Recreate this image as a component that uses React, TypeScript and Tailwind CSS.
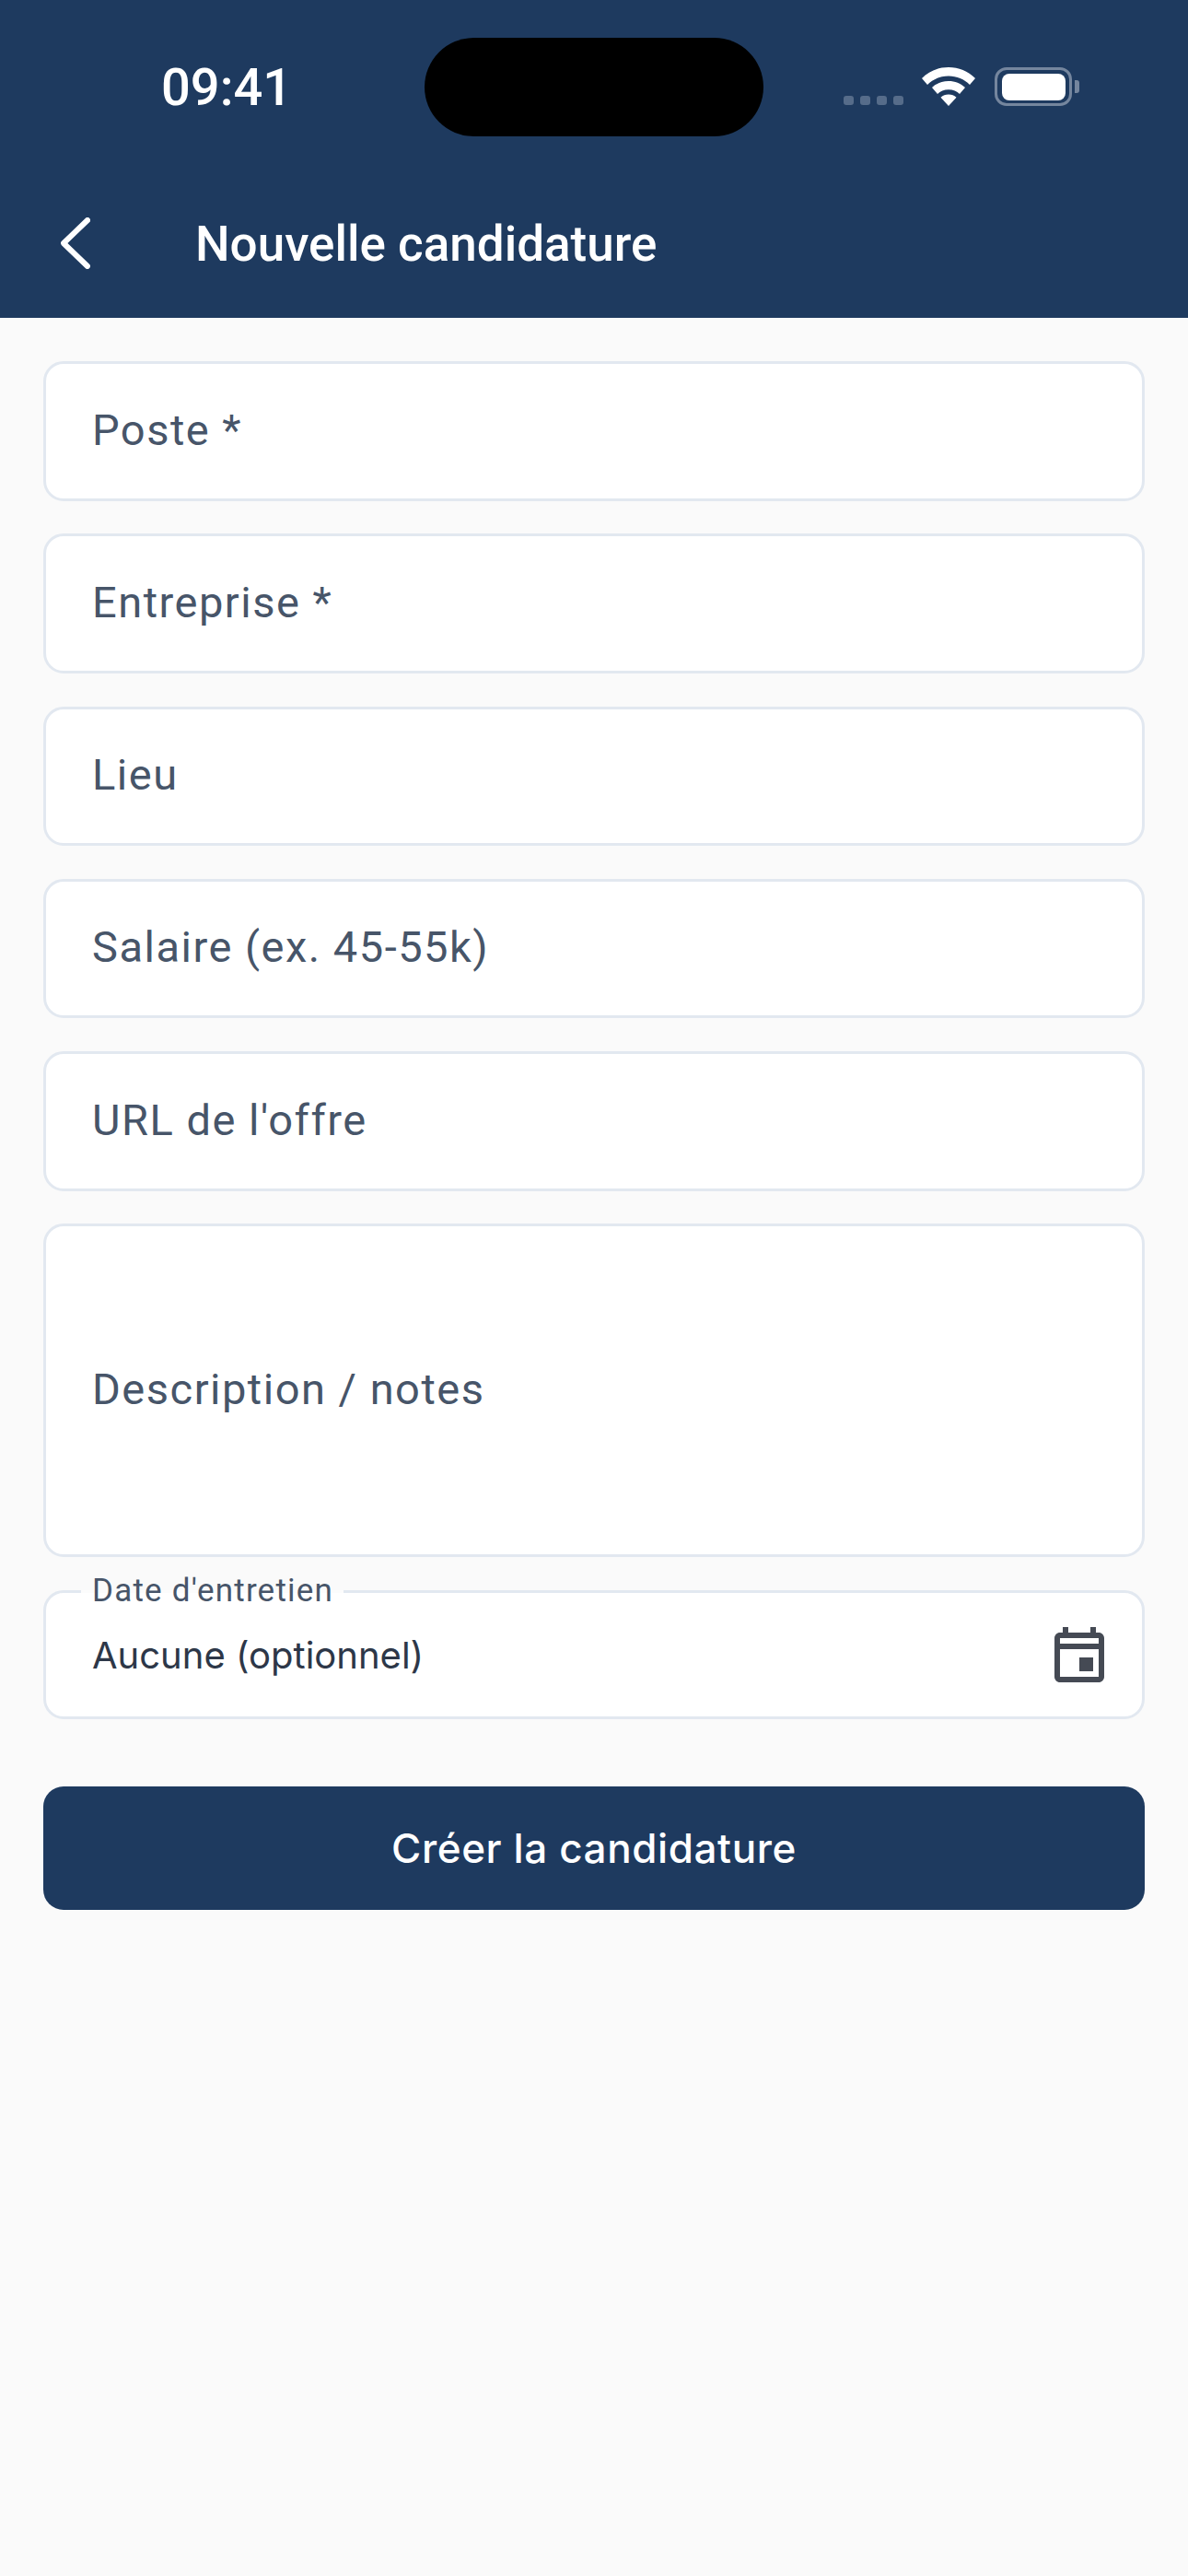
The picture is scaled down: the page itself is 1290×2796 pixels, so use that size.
const roboto = { fontFamily: "Roboto, sans-serif" };

function Field({ label, tall }: { label: string; tall?: boolean }) {
  return (
    <div
      className={`flex items-center rounded-[22px] border-[3px] border-[#e2e8f0] bg-white pb-[2px] pl-[50px] pr-[48px] text-[47px] tracking-[1.5px] text-[#475569] ${tall ? "h-[362px]" : "h-[151.5px]"}`}
    >
      {label}
    </div>
  );
}

function Wifi() {
  return (
    <svg width="58" height="42" viewBox="0 0 58 42" fill="#fff">
      <path d="M29 0C18 0 8 4 0 12l6 7C12 13 20 9.500 29 9.500S46 13 52 19l6-7C50 4 40 0 29 0Z" />
      <path d="M29 15c-7 0-13 2.500-18 7l6 7c3-3 7-4.800 12-4.800S38 26 41 29l6-7c-5-4.500-11-7-18-7Z" />
      <path d="M29 29.500c-3.500 0-6 1-8.500 3.200L29 42l8.500-9.300c-2.500-2.200-5-3.200-8.500-3.200Z" />
    </svg>
  );
}

export default function App() {
  return (
    <div className="flex h-[2796px] w-[1290px] flex-col bg-[#fafafa]" style={roboto}>
      <header className="h-[345px] bg-[#1e3a5f] text-white">
        <div className="relative flex h-[190px] items-start">
          <span className="ml-[175px] mt-[61px] w-[141px] text-[56px] font-medium leading-[68px]">09:41</span>
          <div className="ml-[145px] mt-[41px] h-[107px] w-[368px] rounded-full bg-black" />
          <div className="ml-[87px] mt-[104px] flex gap-[7px]">
            <span className="h-[10px] w-[11px] rounded-[3px] bg-[#566c8a]" />
            <span className="h-[10px] w-[11px] rounded-[3px] bg-[#566c8a]" />
            <span className="h-[10px] w-[11px] rounded-[3px] bg-[#566c8a]" />
            <span className="h-[10px] w-[11px] rounded-[3px] bg-[#566c8a]" />
          </div>
          <div className="ml-[20px] mt-[73px]">
            <Wifi />
          </div>
          <div className="ml-[21px] mt-[73px] flex items-center">
            <div className="flex h-[42px] w-[84px] items-center justify-center rounded-[13px] border-[3px] border-[#75869e]">
              <div className="h-[29px] w-[69px] rounded-[8px] bg-white" />
            </div>
            <div className="ml-[3px] h-[14px] w-[5px] rounded-r-[3px] bg-[#75869e]" />
          </div>
        </div>
        <div className="flex h-[155px] items-start">
          <svg className="ml-[66px] mt-[46px]" width="32" height="56" viewBox="0 0 32 56" fill="none" stroke="#fff" strokeWidth="6" strokeLinecap="round" strokeLinejoin="round">
            <path d="M29 3 3 28l26 25" />
          </svg>
          <h1 className="ml-[114px] mt-[43px] text-[53px] font-medium leading-[64px]">Nouvelle candidature</h1>
        </div>
      </header>
      <main className="flex flex-col gap-[35.75px] px-[47px] pt-[47px]">
        <Field label="Poste *" />
        <Field label="Entreprise *" />
        <Field label="Lieu" />
        <Field label="Salaire (ex. 45-55k)" />
        <Field label="URL de l'offre" />
        <Field label="Description / notes" tall />
        <div className="relative flex h-[139.5px] items-center justify-between rounded-[22px] border-[3px] border-[#e2e8f0] bg-white pl-[50px] pr-[32px]">
          <span className="absolute left-[38px] top-[-3px] h-[3px] w-[285px] bg-[#fcfcfc]" />
          <span className="absolute left-[50px] top-[-23px] text-[35px] leading-[42px] tracking-[1.2px] text-[#475569]">Date d'entretien</span>
          <span className="mt-[2px] text-[40px] text-[#2d3748]" style={{ fontFamily: "Inter, sans-serif" }}>Aucune (optionnel)</span>
          <svg className="mt-[1px]" width="72" height="72" viewBox="0 0 24 24" fill="#454a54">
            <path d="M19 4h-1V2h-2v2H8V2H6v2H5c-1.110 0-1.990.900-1.990 2L3 20c0 1.100.890 2 2 2h14c1.100 0 2-.900 2-2V6c0-1.100-.900-2-2-2zm0 16H5V10h14v10zm0-12H5V6h14v2zm-2 5h-5v5h5v-5z" />
          </svg>
        </div>
        <button className="mt-[38px] flex h-[134px] items-center justify-center rounded-[22px] bg-[#1e3a5f] text-[44px] font-medium tracking-[0.6px] text-white" style={{ fontFamily: "Inter, sans-serif" }}>
          Créer la candidature
        </button>
      </main>
    </div>
  );
}
